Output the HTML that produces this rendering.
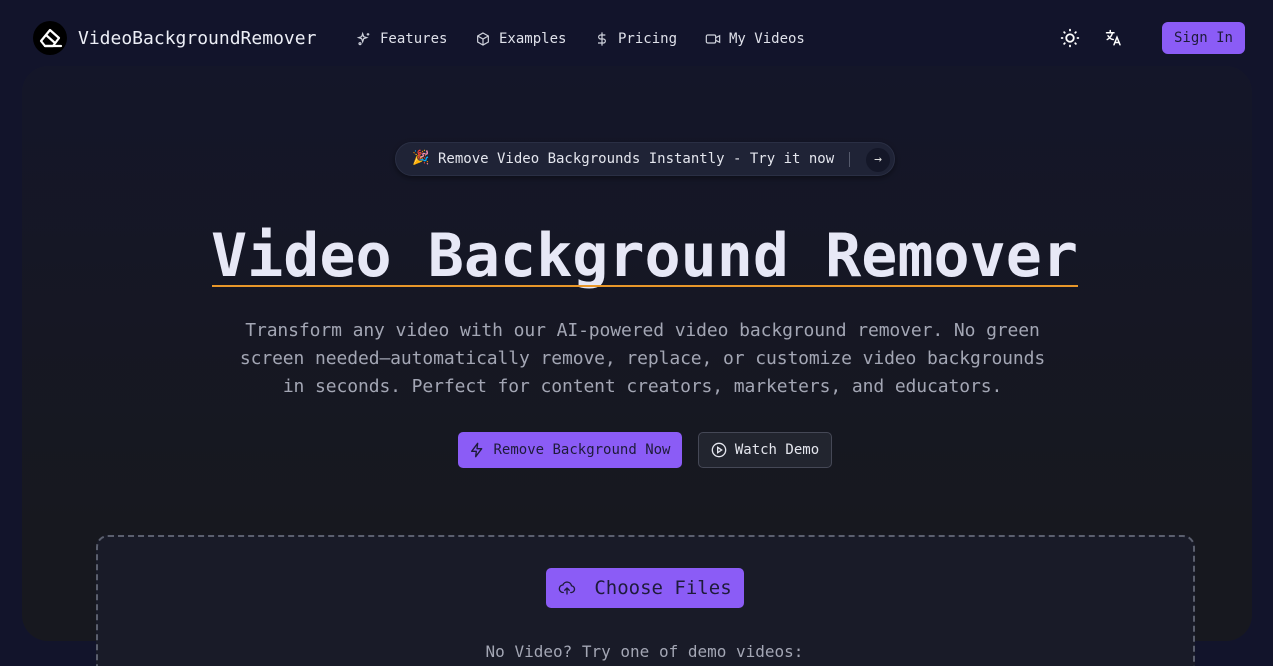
<!DOCTYPE html>
<html style="height:666px;overflow:hidden"><head><meta charset="utf-8"><style>
*{box-sizing:border-box;margin:0;padding:0}
body{width:1273px;height:666px;overflow:hidden;background:#12142b;font-family:"DejaVu Sans Mono","Liberation Mono",monospace;color:#e6e6f0;position:relative}
.card{position:absolute;left:22px;top:66px;width:1230px;height:575px;border-radius:26px;background:linear-gradient(#141629,#17181f 80%)}
nav{position:absolute;top:0;left:0;width:1273px;height:76px}
.logo{position:absolute;left:33px;top:21px;width:34px;height:34px;border-radius:50%;background:#000}
.brand{position:absolute;left:78px;top:28px;font-size:18px;color:#eceef6}
.ni{position:absolute;top:31px;font-size:14px;color:#dfe1ea;display:flex;align-items:center;gap:8px}
.signin{position:absolute;left:1162px;top:22px;width:83px;height:32px;border-radius:6px;background:#8b5cf6;color:#1e1b3a;font-size:14px;text-align:center;line-height:32px}
.pill{position:absolute;left:395px;top:142px;width:500px;height:34px;border-radius:17px;background:#1f2336;border:1px solid #2a2f44;box-shadow:0 2px 6px rgba(0,0,0,.4);font-size:14px;color:#e4e6ee}
h1{position:absolute;left:8px;width:1273px;top:220px;text-align:center;font-size:60px;font-weight:bold;color:#e7e8f6;line-height:72px}
.ul{position:absolute;left:212px;top:285px;width:866px;height:2px;background:#e8972a}
p.sub{position:absolute;left:6px;width:1273px;top:317px;text-align:center;font-size:18px;line-height:28px;color:#a3a6b4;letter-spacing:-0.1px}
.b1{position:absolute;left:458px;top:432px;width:224px;height:36px;border-radius:5px;background:#8b5cf6;color:#1e1b3a;font-size:14px;display:flex;align-items:center;justify-content:center;gap:8px}
.b2{position:absolute;left:698px;top:432px;width:134px;height:36px;border-radius:5px;background:#22252f;border:1px solid #454856;color:#e4e6ee;font-size:14px;display:flex;align-items:center;justify-content:center;gap:8px}
.drop{position:absolute;left:96px;top:535px;width:1099px;height:140px;border:2px dashed #5b5f6e;border-bottom:none;border-radius:12px 12px 0 0;background:#191b28}
.cf{position:absolute;left:546px;top:568px;width:198px;height:40px;border-radius:5px;background:#8b5cf6;color:#1e1b3a;font-size:19px;display:flex;align-items:center;justify-content:center;gap:18px}
.demo{position:absolute;left:8px;width:1273px;top:642px;text-align:center;font-size:16px;color:#a3a6b4}
</style></head><body>
<div class="card"></div>
<nav>
<div class="logo"><svg width="34" height="34" viewBox="0 0 34 34" fill="none" stroke="#fff" stroke-width="2.2" stroke-linejoin="round"><path d="M8 20 L17 9 L26 17 L20 25 H12 Z"/><path d="M12 25 H28" stroke-linecap="round"/><path d="M13 14 L22 22"/></svg></div>
<div class="brand">VideoBackgroundRemover</div>
<div class="ni" style="left:356px"><svg width="16" height="16" viewBox="0 0 24 24" fill="none" stroke="#cfd2dc" stroke-width="1.8"><path d="M10 4l1.5 4.5L16 10l-4.5 1.5L10 16l-1.5-4.5L4 10l4.5-1.5z"/><path d="M18 3v4M16 5h4"/><circle cx="6" cy="19" r="1.5"/></svg>Features</div>
<div class="ni" style="left:475px"><svg width="16" height="16" viewBox="0 0 24 24" fill="none" stroke="#cfd2dc" stroke-width="1.8"><path d="M12 3l8 4.5v9L12 21l-8-4.5v-9z"/><path d="M4 7.5l8 4.5 8-4.5M12 12v9"/></svg>Examples</div>
<div class="ni" style="left:594px"><svg width="16" height="16" viewBox="0 0 24 24" fill="none" stroke="#cfd2dc" stroke-width="1.8"><path d="M12 2v20M17 6H10a3 3 0 000 6h4a3 3 0 010 6H6"/></svg>Pricing</div>
<div class="ni" style="left:705px"><svg width="16" height="16" viewBox="0 0 24 24" fill="none" stroke="#cfd2dc" stroke-width="1.8"><rect x="2" y="6" width="14" height="12" rx="2"/><path d="M16 10l6-3v10l-6-3"/></svg>My Videos</div>
<svg style="position:absolute;left:1060px;top:28px" width="20" height="20" viewBox="0 0 24 24" fill="none" stroke="#fff" stroke-width="2.2" stroke-linecap="round"><circle cx="12" cy="12" r="4.5"/><path d="M12 2v1M12 21v1M2 12h1M21 12h1M5 5l.7.7M18.3 18.3l.7.7M5 19l.7-.7M18.3 5.7l.7-.7"/></svg>
<svg style="position:absolute;left:1105px;top:29px" width="18" height="18" viewBox="0 0 24 24" fill="none" stroke="#fff" stroke-width="2" stroke-linecap="round"><path d="M2 5h10M7 2v3M4 9c2 3 5 5 7 5M10 5c-1 4-3 7-7 9"/><path d="M12 21l4-10 4 10M13.5 18h5"/></svg>
<div class="signin">Sign In</div>
</nav>
<div class="pill"><span style="position:absolute;left:16px;top:7px">🎉</span><span style="position:absolute;left:42px;top:8px">Remove Video Backgrounds Instantly - Try it now</span><span style="position:absolute;left:453px;top:9px;width:1px;height:15px;background:#555a6c"></span><span style="position:absolute;left:470px;top:5px;width:24px;height:24px;border-radius:12px;background:#141728;color:#ddd;text-align:center;line-height:23px;font-size:13px">→</span></div>
<h1>Video Background Remover</h1>
<div class="ul"></div>
<p class="sub">Transform any video with our AI-powered video background remover. No green<br>screen needed—automatically remove, replace, or customize video backgrounds<br>in seconds. Perfect for content creators, marketers, and educators.</p>
<div class="b1"><svg width="16" height="16" viewBox="0 0 24 24" fill="none" stroke="#1e1b3a" stroke-width="2" stroke-linejoin="round"><path d="M13 2L4 14h7l-1 8 9-12h-7z"/></svg>Remove Background Now</div>
<div class="b2"><svg width="16" height="16" viewBox="0 0 24 24" fill="none" stroke="#e4e6ee" stroke-width="2"><circle cx="12" cy="12" r="10"/><path d="M10 8l6 4-6 4z"/></svg>Watch Demo</div>
<div class="drop"></div>
<div class="cf"><svg width="18" height="18" viewBox="0 0 24 24" fill="none" stroke="#1e1b3a" stroke-width="1.8" stroke-linecap="round"><path d="M7 18a5 5 0 01-.5-10A6 6 0 0118 9a4 4 0 01-1 9"/><path d="M12 20v-8M9 15l3-3 3 3"/></svg>Choose Files</div>
<div class="demo">No Video? Try one of demo videos:</div>
</body></html>
